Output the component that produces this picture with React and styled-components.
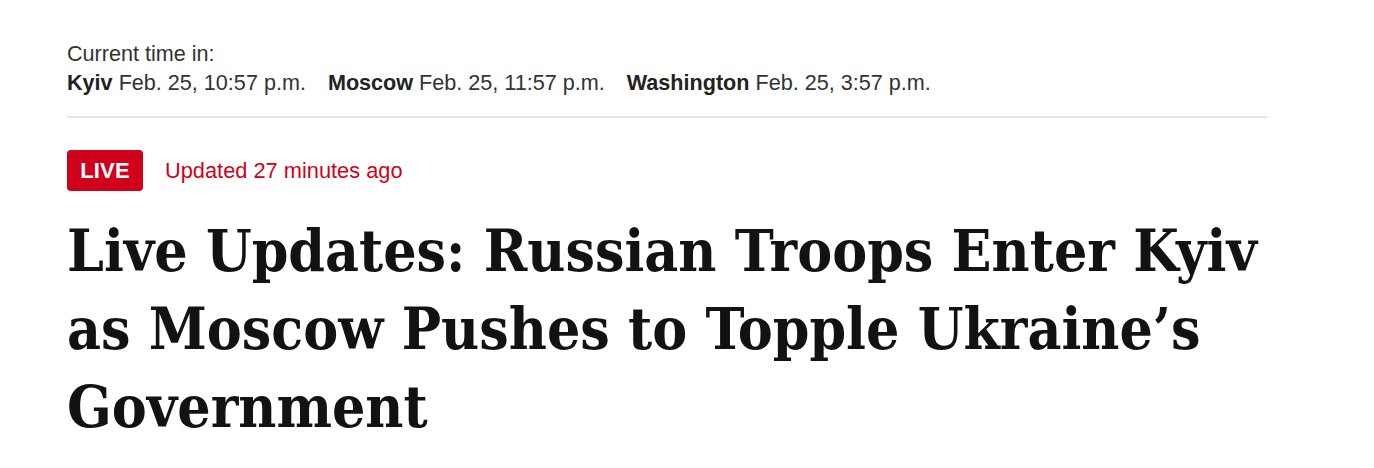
import React from "react";
import styled, { createGlobalStyle } from "styled-components";

const GlobalStyle = createGlobalStyle`
  html, body { margin: 0; padding: 0; background: #fff; }
  body { font-family: "Liberation Sans", Arial, sans-serif; -webkit-font-smoothing: antialiased; }
`;

const Page = styled.main`
  width: 1200px;
  padding: 39px 0 0 67px;
`;

const TimeBlock = styled.section`
  font-size: 21.6px;
  line-height: 29px;
  color: #333;
  padding-bottom: 19px;
  border-bottom: 2px solid #e4e4e4;
`;

const TimeLabel = styled.div``;

const Cities = styled.div`
  display: flex;
  gap: 22px;
`;

const City = styled.span`
  white-space: nowrap;
`;

const CityName = styled.strong`
  font-weight: 700;
  color: #222;
`;

const StatusRow = styled.div`
  display: flex;
  align-items: center;
  gap: 22px;
  margin-top: 32px;
`;

const LiveBadge = styled.span`
  display: inline-flex;
  align-items: center;
  justify-content: center;
  height: 41px;
  width: 76px;
  box-sizing: border-box;
  border-radius: 4px;
  background: #d0021b;
  color: #fff;
  font-weight: 700;
  font-size: 22px;
  letter-spacing: 0.2px;
`;

const Updated = styled.span`
  color: #d0021b;
  font-size: 21.8px;
`;

const Headline = styled.h1`
  margin: 21px 0 0;
  font-family: "DejaVu Serif Condensed", "DejaVu Serif", serif;
  font-weight: 700;
  font-size: 58.3px;
  line-height: 78px;
  color: #121212;
`;

const cities = [
  { name: "Kyiv", time: "Feb. 25, 10:57 p.m." },
  { name: "Moscow", time: "Feb. 25, 11:57 p.m." },
  { name: "Washington", time: "Feb. 25, 3:57 p.m." },
];

export default function App() {
  return (
    <>
      <GlobalStyle />
      <Page>
        <TimeBlock>
          <TimeLabel>Current time in:</TimeLabel>
          <Cities>
            {cities.map((c) => (
              <City key={c.name}>
                <CityName>{c.name}</CityName> {c.time}
              </City>
            ))}
          </Cities>
        </TimeBlock>
        <StatusRow>
          <LiveBadge>LIVE</LiveBadge>
          <Updated>Updated 27 minutes ago</Updated>
        </StatusRow>
        <Headline>
          Live Updates: Russian Troops Enter Kyiv as Moscow Pushes to Topple Ukraine’s Government
        </Headline>
      </Page>
    </>
  );
}
